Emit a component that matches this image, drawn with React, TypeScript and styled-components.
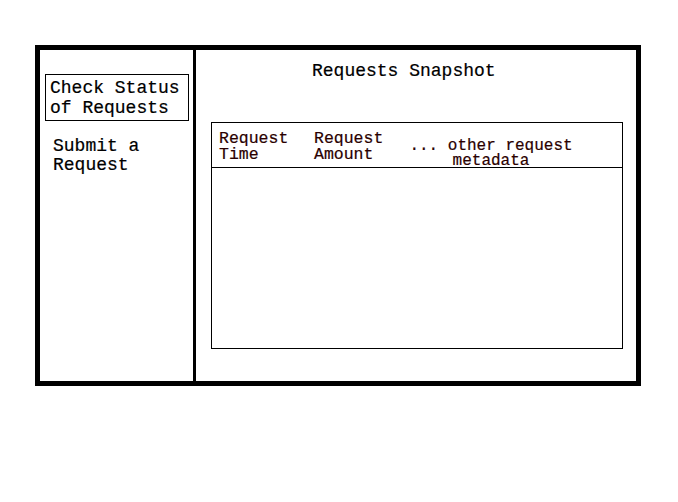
import * as React from 'react'
import styled, { createGlobalStyle } from 'styled-components'

const GlobalStyle = createGlobalStyle`
	html, body {
		margin: 0;
		padding: 0;
		background: #fff;
	}
	body {
		font-family: 'Liberation Mono', 'DejaVu Sans Mono', monospace;
		color: #000;
		-webkit-text-stroke: 0.2px currentColor;
	}
`

const navItems = [
	{ label: ['Check Status', 'of Requests'], active: true },
	{ label: ['Submit a', 'Request'], active: false },
]

const columns = [
	{ lines: ['Request', 'Time'], width: 95, size: 16.5, centered: false },
	{ lines: ['Request', 'Amount'], width: 88, size: 16.5, centered: false },
	{ lines: ['... other request', 'metadata'], width: 178, size: 16, centered: true },
]

export default function App() {
	return (
		<Page>
			<GlobalStyle />
			<Frame>
				<SideBar>
					{navItems.map((item, i) => (
						<NavItem key={i} $active={item.active}>
							{item.label[0]}
							<br />
							{item.label[1]}
						</NavItem>
					))}
				</SideBar>
				<Main>
					<Title>Requests Snapshot</Title>
					<Table>
						<HeaderRow>
							{columns.map((col, i) => (
								<HeaderCell
									key={i}
									$width={col.width}
									$size={col.size}
									$centered={col.centered}
								>
									{col.lines[0]}
									<br />
									{col.lines[1]}
								</HeaderCell>
							))}
						</HeaderRow>
						<TableBody />
					</Table>
				</Main>
			</Frame>
		</Page>
	)
}

const Page = styled.div`
	width: 678px;
	height: 502px;
	padding: 45px 0 0 35px;
	box-sizing: border-box;
`

const Frame = styled.div`
	display: flex;
	width: 606px;
	height: 341px;
	box-sizing: border-box;
	border: 5px solid #000;
`

const SideBar = styled.nav`
	display: flex;
	flex-direction: column;
	align-items: flex-start;
	width: 156px;
	flex-shrink: 0;
	box-sizing: border-box;
	border-right: 3px solid #000;
	padding: 24px 0 0 5px;
`

const NavItem = styled.div<{ $active: boolean }>`
	font-size: 18px;
	line-height: ${p => (p.$active ? '20px' : '19px')};
	white-space: nowrap;
	box-sizing: border-box;
	${p =>
		p.$active
			? `
		width: 144px;
		height: 47px;
		border: 1px solid #000;
		padding: 3px 0 0 4px;
	`
			: `
		margin: 16px 0 0 8px;
	`}
`

const Main = styled.main`
	flex: 1;
	display: flex;
	flex-direction: column;
	padding: 11px 13px 0 15px;
`

const Title = styled.h1`
	margin: 0 0 41px 101px;
	font-size: 18px;
	line-height: 20px;
	font-weight: normal;
`

const Table = styled.div`
	display: flex;
	flex-direction: column;
	width: 412px;
	height: 227px;
	box-sizing: border-box;
	border: 1px solid #000;
`

const HeaderRow = styled.div`
	display: flex;
	align-items: flex-start;
	height: 45px;
	padding: 8px 0 0 7px;
	box-sizing: border-box;
	border-bottom: 1px solid #000;
	color: #2a0000;
`

const HeaderCell = styled.div<{ $width: number; $size: number; $centered: boolean }>`
	width: ${p => p.$width}px;
	flex-shrink: 0;
	font-size: ${p => p.$size}px;
	line-height: ${p => (p.$centered ? '15px' : '16px')};
	white-space: nowrap;
	text-align: ${p => (p.$centered ? 'center' : 'left')};
	margin-top: ${p => (p.$centered ? '8px' : '0')};
`

const TableBody = styled.div`
	flex: 1;
`
